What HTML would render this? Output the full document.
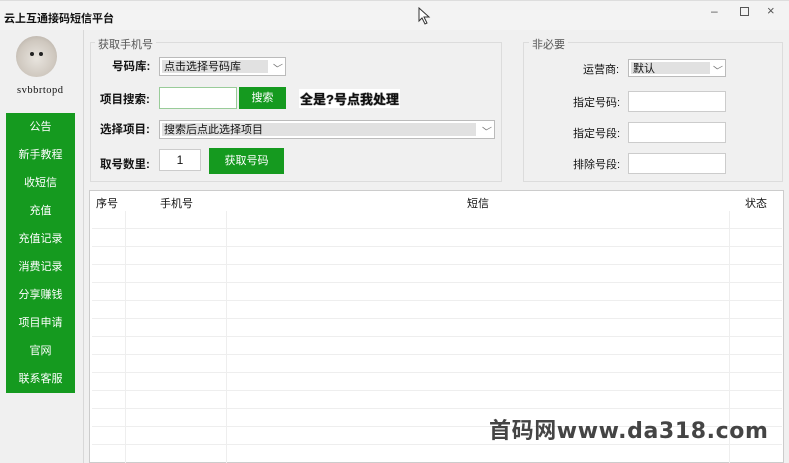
<!DOCTYPE html>
<html><head><meta charset="utf-8"><style>
*{margin:0;padding:0;box-sizing:border-box}
body{width:789px;height:463px;overflow:hidden;background:#f0f0f0;font-family:"Liberation Sans","Noto Sans CJK SC",sans-serif;font-size:11px;color:#111;position:relative}
.a{position:absolute}
.title{left:0;top:0;width:789px;height:30px;background:#f3f3f3;border-top:1px solid #ddd}
.menu{left:6px;top:113px;width:69px;height:280px;background:#159a1f}
.menu div{height:28px;line-height:29px;text-align:center;color:#fff;font-size:11px}
.grp{border:1px solid #dcdcdc;background:#f0f0f0}
.lg{background:#f0f0f0;color:#555;font-size:11px;padding:0 3px}
.lbl{font-weight:bold;font-size:11.5px}
.inp{background:#fff;border:1px solid #ccc}
.sel{background:#fff;border:1px solid #bbb}
.sel span{position:absolute;left:2px;top:2px;bottom:2px;background:#e1e1e1;padding-left:2px;line-height:15px}
.btn{background:#159a1f;color:#fff;text-align:center}
.chev{position:absolute;right:4px;top:2px;color:#777;font-size:10px}
.hl{position:absolute;left:92px;width:690px;height:1px;background:#eee}
.vl{position:absolute;top:211px;width:1px;height:252px;background:#eee}
</style></head><body>
<div class="a title"></div>
<div class="a" style="left:4px;top:10px;font-weight:bold;font-size:11px">云上互通接码短信平台</div>
<div class="a" style="left:711px;top:4px;color:#555;font-size:12px">–</div>
<div class="a" style="left:740px;top:7px;width:9px;height:9px;border:1px solid #555"></div>
<div class="a" style="left:767px;top:3px;color:#555;font-size:13px">×</div>
<svg class="a" style="left:418px;top:7px" width="13" height="18"><path d="M1 1 L1 14 L4 11 L7 17 L9 16 L6 10 L11 10 Z" fill="#fff" stroke="#333"/></svg>
<div class="a" style="left:83px;top:30px;width:1px;height:433px;background:#d8d8d8"></div>
<div class="a" style="left:16px;top:36px;width:41px;height:41px;border-radius:50%;background:radial-gradient(circle at 50% 55%,#e8e4de 0,#cfc8bf 60%,#a9a199 100%)"></div>
<div class="a" style="left:30px;top:52px;width:4px;height:4px;border-radius:50%;background:#222"></div>
<div class="a" style="left:39px;top:52px;width:4px;height:4px;border-radius:50%;background:#222"></div>
<div class="a" style="left:17px;top:85px;font-family:'Liberation Serif',serif;font-size:10.5px;letter-spacing:0.5px">svbbrtopd</div>
<div class="a menu"><div>公告</div><div>新手教程</div><div>收短信</div><div>充值</div><div>充值记录</div><div>消费记录</div><div>分享赚钱</div><div>项目申请</div><div>官网</div><div>联系客服</div></div>

<div class="a grp" style="left:90px;top:42px;width:412px;height:140px"></div>
<div class="a lg" style="left:95px;top:36px">获取手机号</div>
<div class="a lbl" style="left:112px;top:58px">号码库:</div>
<div class="a sel" style="left:159px;top:57px;width:127px;height:19px"><span style="width:106px">点击选择号码库</span><i class="chev">﹀</i></div>
<div class="a lbl" style="left:100px;top:91px">项目搜索:</div>
<div class="a inp" style="left:159px;top:87px;width:78px;height:22px;border-color:#9c9"></div>
<div class="a btn" style="left:239px;top:87px;width:47px;height:22px;line-height:22px">搜索</div>
<div class="a" style="left:299px;top:89px;background:#fff;font-weight:bold;font-size:13px;padding:0 1px;text-shadow:0 0 1px #000">全是?号点我处理</div>
<div class="a lbl" style="left:100px;top:121px">选择项目:</div>
<div class="a sel" style="left:159px;top:120px;width:336px;height:19px"><span style="width:314px">搜索后点此选择项目</span><i class="chev">﹀</i></div>
<div class="a lbl" style="left:100px;top:156px">取号数里:</div>
<div class="a inp" style="left:159px;top:149px;width:42px;height:22px;text-align:center;line-height:21px;font-size:12px">1</div>
<div class="a btn" style="left:209px;top:148px;width:75px;height:26px;line-height:26px">获取号码</div>

<div class="a grp" style="left:523px;top:42px;width:260px;height:140px"></div>
<div class="a lg" style="left:529px;top:36px">非必要</div>
<div class="a" style="left:583px;top:61px">运营商:</div>
<div class="a sel" style="left:628px;top:59px;width:98px;height:18px"><span style="width:79px;top:2px">默认</span><i class="chev">﹀</i></div>
<div class="a" style="left:573px;top:94px">指定号码:</div>
<div class="a inp" style="left:628px;top:91px;width:98px;height:21px"></div>
<div class="a" style="left:573px;top:125px">指定号段:</div>
<div class="a inp" style="left:628px;top:122px;width:98px;height:21px"></div>
<div class="a" style="left:573px;top:156px">排除号段:</div>
<div class="a inp" style="left:628px;top:153px;width:98px;height:21px"></div>

<div class="a" style="left:89px;top:190px;width:695px;height:273px;background:#fff;border:1px solid #ccc"></div>
<div class="a" style="left:96px;top:195px">序号</div>
<div class="a" style="left:160px;top:195px">手机号</div>
<div class="a" style="left:467px;top:195px">短信</div>
<div class="a" style="left:745px;top:195px">状态</div>
<div class="vl" style="left:125px"></div><div class="vl" style="left:226px"></div><div class="vl" style="left:729px"></div>
<div class="hl" style="top:228px"></div><div class="hl" style="top:246px"></div><div class="hl" style="top:264px"></div><div class="hl" style="top:282px"></div><div class="hl" style="top:300px"></div><div class="hl" style="top:318px"></div><div class="hl" style="top:336px"></div><div class="hl" style="top:354px"></div><div class="hl" style="top:372px"></div><div class="hl" style="top:390px"></div><div class="hl" style="top:408px"></div><div class="hl" style="top:426px"></div><div class="hl" style="top:444px"></div>
<div class="a" style="left:489px;top:419px;white-space:nowrap;font-size:22px;font-weight:bold;color:#444;letter-spacing:0.6px;line-height:26px;font-family:'DejaVu Sans','Noto Sans CJK SC',sans-serif">首码网www.da318.com</div>
</body></html>
